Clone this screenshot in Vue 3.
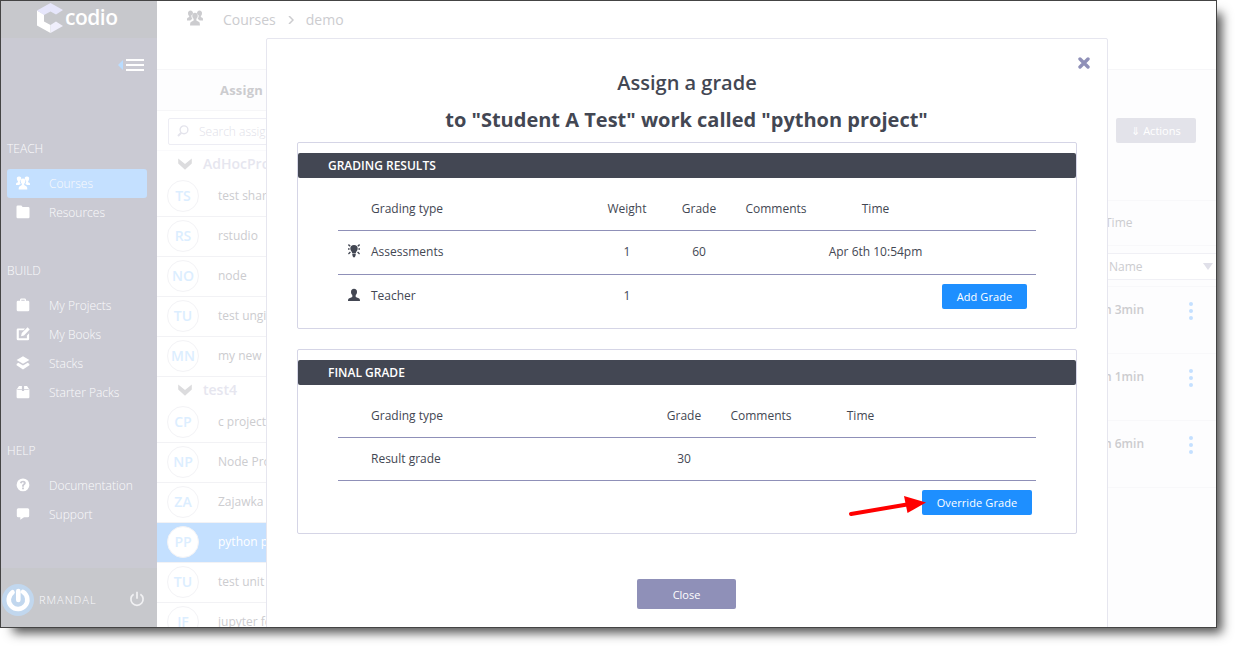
<script setup>
const icons = {
  people:
    'M5.200 3.100a2.200 2.200 0 1 0-4.300 0c0 1 .4 1.700 1 2.200v.9L.3 7c-.3.400-.3 1.400-.3 2.100h2.900c.4-.5 1.300-.9 1.900-1.200-.7-.8-1-1.800-1-3zM8.800 3.100a2.200 2.200 0 1 1 4.300 0c0 1-.4 1.700-1 2.200v.9l1.600.8c.3.400.3 1.400.3 2.100h-2.900c-.4-.5-1.300-.9-1.900-1.200.7-.8 1-1.800 1-3zM7 2.500c1.500 0 2.400 1 2.400 2.500 0 1.200-.5 2.100-1.200 2.700v1.400l2.400 1.300c.6.400.7 1.800.7 3.100H2.700c0-1.300.1-2.700.7-3.100l2.400-1.300V7.700C5.100 7.100 4.600 6.200 4.600 5 4.600 3.500 5.500 2.500 7 2.500z',
  folder: 'M.5 1.700Q.5.5 1.700.5h3.700l1.200 1.500h5.700q1.200 0 1.200 1.200v8.800q0 1.200-1.200 1.200H1.700Q.5 13.200.5 12z',
  bag: 'M4 2.800V1.400L4.800.5h4.400l.8.900v1.400h2q1.300 0 1.300 1.200v8q0 1.200-1.300 1.200H2Q.7 13.200.7 12V4Q.7 2.800 2 2.800zM5.300 2.800h3.400V1.700H5.300z',
  edit: 'M9 1.500 7.500 3.300H2.800v8h8.100V8.500l2.200-2.200v5.600q0 1.300-1.300 1.300H2q-1.300 0-1.300-1.300V2.800q0-1.300 1.300-1.300zM11.600.3l2.100 2.100L8 8.400 5 9.200l.8-3.100z',
  stack: 'M7 .3 13.400 4 7 7.700.6 4zM2.300 6.800 7 9.500l4.700-2.700 1.700 1.200v1.300L7 13.500.6 9.300V8z',
  pack: 'M3 .9h2.900v5h2.200v-5H11l2.400 3.600v7.500q0 1.200-1.200 1.200H1.800Q.6 13.200.6 12V4.500zM1.300 4.300v.7h4.600v-.7zM8.100 4.300v.7h4.600v-.7z',
  help: 'M7 .5a6.400 6.400 0 1 0 0 12.800A6.400 6.400 0 0 0 7 .5zM6.100 9.600h1.800v1.700H6.100zM6.100 8.800V7.600c0-1.300 1.700-1.500 1.700-2.600C7.800 3.800 6 3.900 5.700 5.400L3.900 4.900C4.500 1.900 9.800 1.900 9.800 5c0 1.800-1.900 2-1.900 3v.8z',
  chat: 'M2.300 1.200h9.400q1.500 0 1.500 1.500v6q0 1.500-1.500 1.500H8L4.300 12.800v-2.600h-2Q.8 10.200.8 8.700v-6q0-1.500 1.500-1.500z',
}

const sections = [
  { title: 'TEACH', items: [['Courses', 'people', true], ['Resources', 'folder']] },
  { title: 'BUILD', items: [['My Projects', 'bag'], ['My Books', 'edit'], ['Stacks', 'stack'], ['Starter Packs', 'pack']] },
  { title: 'HELP', items: [['Documentation', 'help'], ['Support', 'chat']] },
]

const groups = [
  { name: 'AdHocPro', rows: [['TS', 'test shar'], ['RS', 'rstudio'], ['NO', 'node'], ['TU', 'test ungi'], ['MN', 'my new']] },
  {
    name: 'test4',
    rows: [['CP', 'c project'], ['NP', 'Node Pro'], ['ZA', 'Zajawka'], ['PP', 'python p', true], ['TU', 'test unit'], ['JF', 'jupyter fo']],
  },
]

const durations = ['h 3min', 'h 1min', 'h 6min']
</script>

<template>
  <div class="frame">
    <div class="window">
      <aside class="sidebar">
        <div class="brand">
          <svg width="27" height="31" viewBox="0 0 27 31">
            <path d="M0 7.500V22.500L13.500 30V22L7 18.500V11.500z" fill="#fff" />
            <path d="M0 7.500 13.500 0 26 7 19 11.500 13.500 8.500 7 12z" fill="#e6e6fb" />
            <path d="M13.500 30 26 23 19 18.500 13.500 22z" fill="#f0effc" />
          </svg>
          <span>codio</span>
        </div>
        <div class="toggle"><i class="tri"></i><span class="burger"><i></i><i></i><i></i></span></div>
        <nav>
          <section v-for="s in sections" :key="s.title">
            <h4>{{ s.title }}</h4>
            <a v-for="[label, icon, active] in s.items" :key="label" :class="{ active }">
              <svg width="14" height="14" viewBox="0 0 14 14"><path :d="icons[icon]" fill="#fff" fill-rule="evenodd" /></svg>
              <span>{{ label }}</span>
            </a>
          </section>
        </nav>
        <div class="user">
          <svg width="32" height="32" viewBox="0 0 32 32">
            <circle cx="16" cy="16" r="16" fill="#c1d7ee" />
            <path d="M10.500 8.300A9.300 9.300 0 1 0 21 7.900M16.300 7v9" fill="none" stroke="#fff" stroke-width="4.600" stroke-linecap="round" />
          </svg>
          <span>RMANDAL</span>
          <svg class="power" width="16" height="16" viewBox="0 0 16 16">
            <path d="M4.600 3.200A6.100 6.100 0 1 0 11.400 3.200M8 .8v7" fill="none" stroke="#f1f1f3" stroke-width="1.700" />
          </svg>
        </div>
      </aside>

      <main>
        <header class="crumbs">
          <svg width="16" height="16" viewBox="0 0 14 14"><path :d="icons.people" fill="#cccccf" /></svg>
          <span class="c1">Courses</span>
          <svg class="sep" width="6" height="8" viewBox="0 0 6 8"><path d="M1 0l4 4-4 4" fill="none" stroke="#cccccf" stroke-width="1.500" /></svg>
          <span>demo</span>
        </header>
        <div class="body">
          <div class="list">
            <div class="list-title">Assign</div>
            <div class="search-wrap">
              <div class="search">
                <svg width="12" height="12" viewBox="0 0 12 12">
                  <circle cx="7" cy="4.800" r="3.900" fill="none" stroke="#e4e4ec" stroke-width="1.400" />
                  <path d="M4.300 7.800 1 11" stroke="#e4e4ec" stroke-width="2" />
                </svg>
                <span>Search assig</span>
              </div>
            </div>
            <div v-for="g in groups" :key="g.name">
              <div class="group">
                <svg width="14" height="12" viewBox="0 0 14 12"><path d="M.2.600 7 6 13.800.600V5.600L7 11.700.2 5.600z" fill="#dcdcde" /></svg>
                <span>{{ g.name }}</span>
              </div>
              <div v-for="[code, name, active] in g.rows" :key="name" class="row" :class="{ active }">
                <b>{{ code }}</b><span>{{ name }}</span>
              </div>
            </div>
          </div>
          <div class="detail">
            <div class="tools"><button>⇓ Actions</button></div>
            <div class="time-head">Time</div>
            <div class="filter"><div class="filter-box"><span>Name</span><i></i></div></div>
            <div v-for="d in durations" :key="d" class="student">
              <b>{{ d }}</b>
              <span class="dots"><i></i><i></i><i></i></span>
            </div>
          </div>
        </div>
      </main>

      <div class="modal">
        <svg class="close-x" width="12" height="12" viewBox="0 0 12 12">
          <path d="M2 2l8 8M10 2l-8 8" stroke="#8f90b8" stroke-width="3.400" stroke-linecap="round" />
        </svg>
        <h2>Assign a grade</h2>
        <h3>to "Student A Test" work called "python project"</h3>

        <div class="panel first">
          <div class="bar">GRADING RESULTS</div>
          <div class="grid results">
            <div class="tr head"><i></i><span>Grading type</span><span>Weight</span><span>Grade</span><span>Comments</span><span>Time</span></div>
            <div class="tr">
              <svg width="12" height="14" viewBox="0 0 12 14">
                <path d="M6 1a3.700 3.700 0 0 1 3.700 3.700C9.700 6.600 8 7.500 7.800 9H4.200C4 7.500 2.300 6.600 2.300 4.700A3.700 3.700 0 0 1 6 1zM4.300 9.500h3.400v1.500l-.8 2.200H5.100L4.300 11z" fill="#434753" />
                <path d="M.4.600 2.200 2.300M11.600.6 9.800 2.300M0 5h1.600M12 5h-1.600M.4 10l2-2M11.600 10l-2-2" stroke="#434753" stroke-width="1.400" />
              </svg>
              <span>Assessments</span><span>1</span><span>60</span><span></span><span>Apr 6th 10:54pm</span>
            </div>
            <div class="tr last">
              <svg width="12" height="14" viewBox="0 0 12 14">
                <path d="M6 .8c2 0 3 1.300 3 3.100C9 5.500 8.300 6.400 7.700 7v2l3.500 1.500c.6.400.8 1.400.8 2.500H0c0-1.100.2-2.100.8-2.500L4.300 9V7C3.700 6.400 3 5.500 3 3.900 3 2.100 4 .8 6 .8z" fill="#434753" />
              </svg>
              <span>Teacher</span><span>1</span><span></span><span></span><span></span>
              <button class="blue add">Add Grade</button>
            </div>
          </div>
        </div>

        <div class="panel second">
          <div class="bar">FINAL GRADE</div>
          <div class="grid final">
            <div class="tr head"><i></i><span>Grading type</span><span>Grade</span><span>Comments</span><span>Time</span></div>
            <div class="tr"><i></i><span>Result grade</span><span>30</span><span></span><span></span></div>
            <div class="foot"><button class="blue override">Override Grade</button></div>
          </div>
        </div>

        <button class="close">Close</button>
      </div>

      <svg class="arrow" width="80" height="24" viewBox="0 0 80 24">
        <path d="M2 19 58 9.500" stroke="#f00" stroke-width="4" stroke-linecap="round" />
        <path d="M55 1 77 7.500 58.500 18z" fill="#f00" />
      </svg>
    </div>
  </div>
</template>

<style>
body { background: #fff; }
</style>

<style scoped>
* { box-sizing: border-box; }
h2, h3, h4 { margin: 0; }
button { border: 0; padding: 0; font: inherit; border-radius: 2px; }
svg { display: block; flex: none; }
.frame {
  position: relative; z-index: 0; width: 1235px; height: 646px; overflow: hidden;
  font-family: "Open Sans", "Noto Sans", sans-serif; font-size: 12px; color: #434753;
}
.frame::before {
  content: ""; position: absolute; z-index: -1; left: 0; top: 0; width: 1209px; height: 620px;
  box-shadow: 13px 13px 10px rgba(0, 0, 0, .68);
}
.window {
  position: relative; width: 1217px; height: 628px; overflow: hidden;
  border: 1px solid #444; background: #fff; display: flex;
}

.sidebar { width: 156px; background: #cacad3; display: flex; flex-direction: column; color: #fafafc; flex: none; }
.brand { height: 37px; background: #c7c8cc; display: flex; padding: 2px 0 0 36px; color: #fff; flex: none; }
.brand span { font-size: 21px; font-weight: 600; line-height: 28px; margin-left: 1px; letter-spacing: -.5px; }
.toggle { display: flex; align-items: center; justify-content: flex-end; height: 54px; padding: 0 13px 0 0; gap: 3px; }
.tri { border: 5px solid transparent; border-left: 0; border-right-color: #b9dcff; }
.burger { display: flex; flex-direction: column; gap: 3px; }
.burger i { width: 18px; height: 2px; background: #fff; }
nav { flex: 1; padding: 47px 10px 0 6px; font-weight: 300; }
section { margin-bottom: 34px; }
h4 { font-size: 12px; font-weight: 300; height: 30px; line-height: 20px; }
nav a { height: 29px; display: flex; align-items: center; padding-left: 9px; border-radius: 3px; }
nav a span { margin-left: 19px; }
nav a svg { margin-top: -2px; }
nav a.active { background: #c4e0ff; }
.user { height: 59px; background: #c7c8cc; display: flex; align-items: center; padding: 5px 12px 0 1px; flex: none; }
.user span { margin: -2px 0 0 5px; font-size: 11px; letter-spacing: 1px; font-weight: 300; flex: 1; }
.power { margin-top: -2px; }

main { flex: 1; display: flex; flex-direction: column; color: #cccccf; min-width: 0; }
.crumbs { height: 68px; display: flex; align-items: flex-start; padding: 9px 0 0 30px; font-size: 14px; line-height: 20px; flex: none; }
.c1 { margin-left: 20px; }
.sep { margin: 6px 12px 0; }
.body { flex: 1; display: flex; justify-content: space-between; border-top: 1px solid #f6f6f8; min-height: 0; overflow: hidden; }
.list { width: 110px; white-space: nowrap; overflow: hidden; background: #fff; }
.list-title { height: 41px; border-bottom: 1px solid #f6f6f8; background: #fdfdfe; padding-left: 63px; font-weight: 700; line-height: 40px; font-size: 13px; letter-spacing: .2px; }
.search-wrap { height: 40px; padding: 7px 0 0 11px; border-bottom: 1px solid #fafafc; }
.search { height: 27px; width: 130px; border: 1px solid #ededf4; border-radius: 2px; display: flex; align-items: center; padding-left: 8px; color: #dfdfe9; font-weight: 300; }
.search svg { margin-top: -2px; }
.search span { margin-left: 10px; }
.group { height: 26px; display: flex; align-items: center; padding: 0 0 1px 21px; font-size: 14px; color: #e6e6ef; font-weight: 600; }
.group span { margin-left: 11px; }
.row { height: 40px; border-bottom: 1px solid #f2f2f5; display: flex; align-items: center; padding: 0 0 2px 10px; }
.row b { width: 32px; height: 32px; border: 1px solid #f3f3f6; border-radius: 50%; background: #fff; color: #dceeff; font-size: 14px; font-weight: 600; line-height: 30px; text-align: center; flex: none; margin-top: 1px; }
.row span { margin-left: 19px; margin-top: -1px; }
.row.active { background: #c4e0ff; color: #fff; }

.detail { width: 109px; background: #fdfdfe; }
.tools { height: 131px; padding: 48px 0 0 9px; border-bottom: 1px solid #f8f8fa; }
.tools button { display: block; width: 80px; height: 25px; background: #e3e3ea; color: #fff; font-size: 11px; }
.time-head { height: 45px; line-height: 43px; border-bottom: 1px solid #f8f8fa; text-indent: -2px; }
.filter { height: 41px; padding-top: 7px; border-bottom: 1px solid #f8f8fa; }
.filter-box { height: 27px; border: 1px solid #f0f0f5; border-width: 1px 0; background: #fff; display: flex; align-items: center; padding: 0 3px 0 2px; justify-content: space-between; }
.filter-box i { border: 5px solid transparent; border-top: 7px solid #e0e0e9; border-bottom: 0; }
.student { height: 67px; border-bottom: 1px solid #f8f8fa; display: flex; justify-content: space-between; padding: 14px 23px 0 0; }
.student b { font-weight: 600; line-height: 18px; margin-left: -3px; }
.dots { display: flex; flex-direction: column; gap: 3px; padding-top: 1px; }
.dots i { width: 4px; height: 4px; border-radius: 50%; background: #c4e0ff; }

.modal {
  position: absolute; left: 265px; top: 37px; width: 842px; height: 620px; background: #fff;
  border: 1px solid #e6e6ef; border-radius: 2px; padding: 0 30px; text-align: center;
}
.close-x { position: absolute; right: 17px; top: 18px; }
h2 { font-size: 20px; font-weight: 600; line-height: 28px; padding-top: 30px; }
h3 { font-size: 20px; font-weight: 700; line-height: 28px; margin: 9px 1px 0 0; }
.panel { border: 1px solid #d5d5e6; border-radius: 2px; padding-top: 10px; text-align: left; }
.first { height: 187px; margin-top: 8px; }
.second { height: 185px; margin-top: 20px; }
.bar { height: 25px; line-height: 25px; background: #434753; color: #fff; font-weight: 600; padding-left: 30px; border-radius: 2px; }
.grid { width: 698px; margin: 8px 0 0 40px; }
.tr { display: grid; align-items: center; height: 44px; padding-bottom: 2px; border-bottom: 1px solid #8f90b8; }
.results .tr { grid-template-columns: 33px 220px 72px 72px 82px 117px 1fr; }
.final .tr { grid-template-columns: 33px 277px 72px 82px 117px 1fr; }
.grid .tr.head { height: 45px; padding-bottom: 0; }
.tr.head span { margin-top: 1px; }
.final .tr:not(.head) { height: 43px; padding-bottom: 0; }
.tr.last { border: 0; }
.tr svg { margin: -2px 0 0 10px; }
.tr span { text-align: center; margin-top: -1px; }
.tr span:nth-child(2) { text-align: left; }
.blue { display: block; height: 25px; background: #1e8fff; color: #fff; font-size: 11px; letter-spacing: .1px; }
.add { width: 85px; margin-left: 8px; }
.foot { padding: 9px 4px 0 0; display: flex; justify-content: flex-end; }
.override { width: 110px; }
.close { width: 99px; height: 30px; background: #8f90b8; color: #fff; font-size: 11px; margin: 45px 1px 0 0; }
.arrow { position: absolute; left: 848px; top: 494px; }
</style>
